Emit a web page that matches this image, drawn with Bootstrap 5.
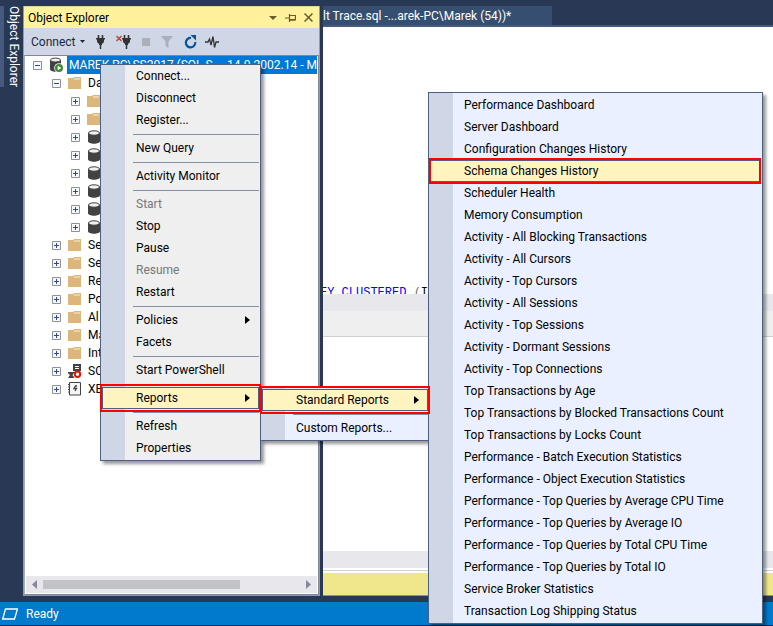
<!DOCTYPE html>
<html lang="en">
<head>
<meta charset="utf-8">
<meta name="viewport" content="width=device-width, initial-scale=1">
<title>Object Explorer</title>
<link href="https://cdn.jsdelivr.net/npm/bootstrap@5.3.0/dist/css/bootstrap.min.css" rel="stylesheet">
<style>
:root { --frame:#293955; --edge:#8e9bbc; --line:#4d6082; --strip:#cfd6e5; --hot:#fdf4bf; }
body { font:12px/18px Roboto,"Open Sans",sans-serif; color:#000; background:var(--frame); overflow:hidden; }
button { font:inherit; color:inherit; background:none; border:0; padding:0; text-align:left; white-space:nowrap; }
svg { display:block; flex:none; }
.main-area { padding-top:6px; padding-bottom:6px; min-height:0; }
.side-rail { width:23px; }
.side-tab { writing-mode:vertical-rl; width:23px; min-height:80px; border-left:4px solid #465a7d; color:#fff; line-height:17px; }
.dock { width:297px; border:1px solid var(--edge); border-top:0; background:var(--strip); margin-right:3px; }
.dock-title { height:22px; background:#fff29d; border-top:1px solid #e3d79a; padding:0 6px 0 4px; }
.dock-title h1 { font-size:12px; line-height:20px; margin:0; font-weight:400; }
.toolbar-row { height:27px; padding-left:7px; color:#1b293e; }
.connect-btn { width:54px; }
.tool-set { gap:11px; margin-left:11px; }
.tree { border:1px solid #828790; border-left-color:#a5adbd; background:#fff; min-height:0; padding:0 1px 1px 1px; }
.node { height:18px; white-space:nowrap; }
.node svg.glyph { margin-left:7px; margin-right:3px; }
.lvl-0 { padding-left:7px; }
.lvl-1 { padding-left:26px; }
.lvl-2 { padding-left:45px; }
.node-name { padding-left:3px; }
.picked { background:#0078d7; color:#fff; padding-left:2px; }
.scroller { height:17px; background:#e8e8ec; padding:0 6px; }
.thumb { height:9px; width:197px; background:#c2c3c9; margin-left:6px; }
.doc { min-width:0; }
.doc-tab { height:19px; width:229px; background:#364e6f; color:#fff; line-height:21px; }
.sheet { background:#fff; border-top:2px solid #465a7d; border-bottom:1px solid #8a90a0; min-height:0; }
.code-pane { height:267px; overflow:hidden; white-space:pre; }
.code-pane code { font:12px/16px "Liberation Mono",monospace; color:#00f; margin-left:-3px; margin-bottom:-7px; }
.band { height:17px; background:#e8e8ec; }
.band-tabs { height:26px; background:#efefef; border-bottom:1px solid #d0d0d0; }
.band-rule { height:3px; border-top:1px solid #d0d0d0; margin-top:2px; }
.band-note { height:22px; background:#f0e68c; }
.status { height:24px; background:#007acc; color:#fff; border-bottom:1px solid #06263f; padding-left:2px; }
.flyout { position:absolute; margin:0; padding:1px 1px 1px 0; list-style:none; border:1px solid var(--line); background:linear-gradient(90deg,var(--strip) 24px,#eaf0ff 24px); box-shadow:3px 3px 3px rgba(0,0,0,.4); }
.flyout button { display:flex; align-items:center; justify-content:space-between; width:100%; height:22px; padding:0 9px 0 35px; }
.flyout button:disabled { color:#777; }
.flyout hr { margin:3px 0 2px 32px; border:0; border-top:1px solid #8591a8; opacity:1; }
.flyout .hot { position:relative; width:auto; min-width:calc(100% - 1px); margin-left:1px; padding-left:33px; padding-right:8px; background:var(--hot); border:1px solid var(--line); }
.hot::after { content:""; position:absolute; z-index:5; inset:-4px -3px; border:2px solid #f00; }
.menu-main { left:100px; top:64px; width:161px; padding-top:0; background:linear-gradient(90deg,var(--strip) 24px,#efefef 24px); }
.menu-reports { left:260px; top:387px; width:170px; }
.menu-standard { left:428px; top:92px; width:335px; padding-right:0; }
.menu-standard .hot { min-width:calc(100% - 3px); margin-right:2px; }
.menu-standard .hot::after { inset:-3px -2px; }
</style>
<script src="https://cdn.jsdelivr.net/npm/bootstrap@5.3.0/dist/js/bootstrap.bundle.min.js"></script>
</head>
<body class="vh-100 d-flex flex-column position-relative">
<svg width="0" height="0" class="position-absolute" aria-hidden="true">
  <defs>
    <symbol id="plus" viewBox="0 0 9 9"><path d="M.5.5h8v8h-8z" fill="#f8f8f8" stroke="#919191"/><path d="M2 4.5h5M4.5 2v5" stroke="#2b4a9b"/></symbol>
    <symbol id="minus" viewBox="0 0 9 9"><path d="M.5.5h8v8h-8z" fill="#f8f8f8" stroke="#919191"/><path d="M2 4.5h5" stroke="#2b4a9b"/></symbol>
    <symbol id="folder" viewBox="0 0 14 14"><path d="M0 2h5l1-1h7v12H0z" fill="#dcb67a"/><path d="M6 3h6" stroke="#f8eedc"/></symbol>
    <symbol id="db" viewBox="0 0 14 14"><path d="M1 3v8c0 3.600 12 3.600 12 0V3z" fill="#424242"/><ellipse cx="7" cy="3" rx="5.500" ry="2.200" fill="#f0f0f0" stroke="#424242"/></symbol>
    <symbol id="server" viewBox="0 0 15 16"><path d="M1 3v9c0 3.600 11 3.600 11 0V3z" fill="#424242"/><ellipse cx="6.500" cy="3" rx="5" ry="2" fill="#f0f0f0" stroke="#424242"/><circle cx="10" cy="11" r="4.800" fill="#fff"/><circle cx="10" cy="11" r="4" fill="#388a34"/><path d="M8.700 8.700v4.600l3.800-2.300z" fill="#fff"/></symbol>
    <symbol id="agent" viewBox="0 0 14 14"><path d="M5 0h8v7H5z" fill="#424242"/><path d="M7 2.500h4M7 4.500h4" stroke="#fff"/><path d="M0 8h7v1.500H5.500L4.500 11 6.500 14H0l2-3L.5 9.500H0z" fill="#424242"/><circle cx="9.500" cy="10.300" r="2.700" fill="#fff" stroke="#e51400" stroke-width="2"/></symbol>
    <symbol id="events" viewBox="0 0 14 14"><path d="M1.500.5h11v12.500h-11z" fill="#f4f4f4" stroke="#424242"/><path d="M0 2.500h2M0 5h2M0 7.500h2M0 10h2" stroke="#424242"/><path d="M9 4H7.500L6 6.500h2.500L7 9" fill="none" stroke="#424242" stroke-width="1.300"/></symbol>
    <symbol id="plug" viewBox="0 0 9 14"><path d="M2.500 0v4M6.500 0v4" stroke="#333" stroke-width="1.600"/><path d="M0 3h9v1.500H8V7L6 9v1H3V9L1 7V4.500H0z" fill="#333"/><path d="M4.500 9v5" stroke="#333" stroke-width="1.500"/></symbol>
    <symbol id="arrow" viewBox="0 0 5 8"><path d="M0 0l5 4-5 4z"/></symbol>
  </defs>
</svg>

<main class="main-area d-flex flex-fill">
  <nav class="side-rail flex-shrink-0" aria-label="Docked windows"><button class="side-tab">Object Explorer</button></nav>

  <section class="dock d-flex flex-column flex-shrink-0">
    <header class="dock-title d-flex align-items-center">
      <h1 class="flex-fill">Object Explorer</h1>
      <div class="d-flex align-items-center gap-2">
        <button aria-label="Window position"><svg width="8" height="4" viewBox="0 0 8 4"><path d="M0 0h8L4 4z" fill="#6b5a2e"/></svg></button>
        <button aria-label="Auto hide"><svg width="11" height="8" viewBox="0 0 11 8"><path d="M0 4h4M4.500 0v8M5 1.500h5.500v4H5M5 6.200h5.500" fill="none" stroke="#6b5a2e" stroke-width="1.200"/></svg></button>
        <button aria-label="Close"><svg width="9" height="9" viewBox="0 0 9 9"><path d="M.5.5l8 8M8.500.5l-8 8" stroke="#6b5a2e" stroke-width="1.500"/></svg></button>
      </div>
    </header>
    <div class="toolbar-row d-flex align-items-center" role="toolbar">
      <button class="connect-btn d-flex align-items-center justify-content-between">Connect <svg width="5" height="3" viewBox="0 0 5 3"><path d="M0 0h5L2.500 3z" fill="#1b293e"/></svg></button>
      <div class="tool-set d-flex align-items-center">
        <button aria-label="Connect Object Explorer"><svg width="9" height="14"><use href="#plug"/></svg></button>
        <button class="d-flex" aria-label="Disconnect"><svg width="6" height="14" viewBox="0 0 6 14"><path d="M.5 1l5 5M5.500 1l-5 5" stroke="#b5482e" stroke-width="1.500"/></svg><svg width="9" height="14"><use href="#plug"/></svg></button>
        <button disabled aria-label="Stop"><svg width="8" height="8" viewBox="0 0 8 8"><path d="M0 0h8v8H0z" fill="#abafba"/></svg></button>
        <button disabled aria-label="Filter"><svg width="12" height="12" viewBox="0 0 12 12"><path d="M0 0h12L7.500 5.500V12l-3-2V5.500z" fill="#abafba"/></svg></button>
        <div class="d-flex align-items-center gap-2">
          <button aria-label="Refresh"><svg width="13" height="14" viewBox="0 0 13 14"><path d="M7 3a4.700 4.700 0 1 0 4.200 4" fill="none" stroke="#00539c" stroke-width="2.200"/><path d="M6.500 0H12v5.500z" fill="#00539c"/></svg></button>
          <button aria-label="Activity Monitor"><svg width="14" height="12" viewBox="0 0 14 12"><path d="M0 6h3l1.500-3L6 9l2-8.500 1.500 11L11 6h3" fill="none" stroke="#333" stroke-width="1.300"/></svg></button>
        </div>
      </div>
    </div>
    <div class="tree d-flex flex-column flex-fill">
      <div class="flex-fill overflow-hidden" role="tree">
        <div class="node lvl-0 d-flex align-items-center" role="treeitem"><svg width="9" height="9"><use href="#minus"/></svg><svg class="glyph" width="15" height="16"><use href="#server"/></svg><span class="picked d-flex justify-content-between flex-fill"><span>MAREK-PC\SS2017 (SQL S</span><span>14.0.2002.14 - M</span></span></div>
        <div class="node lvl-1 d-flex align-items-center" role="treeitem"><svg width="9" height="9"><use href="#minus"/></svg><svg class="glyph" width="14" height="14"><use href="#folder"/></svg><span class="node-name">Da</span></div>
        <div class="node lvl-2 d-flex align-items-center" role="treeitem"><svg width="9" height="9"><use href="#plus"/></svg><svg class="glyph" width="14" height="14"><use href="#folder"/></svg></div>
        <div class="node lvl-2 d-flex align-items-center" role="treeitem"><svg width="9" height="9"><use href="#plus"/></svg><svg class="glyph" width="14" height="14"><use href="#folder"/></svg></div>
        <div class="node lvl-2 d-flex align-items-center" role="treeitem"><svg width="9" height="9"><use href="#plus"/></svg><svg class="glyph" width="14" height="14"><use href="#db"/></svg></div>
        <div class="node lvl-2 d-flex align-items-center" role="treeitem"><svg width="9" height="9"><use href="#plus"/></svg><svg class="glyph" width="14" height="14"><use href="#db"/></svg></div>
        <div class="node lvl-2 d-flex align-items-center" role="treeitem"><svg width="9" height="9"><use href="#plus"/></svg><svg class="glyph" width="14" height="14"><use href="#db"/></svg></div>
        <div class="node lvl-2 d-flex align-items-center" role="treeitem"><svg width="9" height="9"><use href="#plus"/></svg><svg class="glyph" width="14" height="14"><use href="#db"/></svg></div>
        <div class="node lvl-2 d-flex align-items-center" role="treeitem"><svg width="9" height="9"><use href="#plus"/></svg><svg class="glyph" width="14" height="14"><use href="#db"/></svg></div>
        <div class="node lvl-2 d-flex align-items-center" role="treeitem"><svg width="9" height="9"><use href="#plus"/></svg><svg class="glyph" width="14" height="14"><use href="#db"/></svg></div>
        <div class="node lvl-1 d-flex align-items-center" role="treeitem"><svg width="9" height="9"><use href="#plus"/></svg><svg class="glyph" width="14" height="14"><use href="#folder"/></svg><span class="node-name">Se</span></div>
        <div class="node lvl-1 d-flex align-items-center" role="treeitem"><svg width="9" height="9"><use href="#plus"/></svg><svg class="glyph" width="14" height="14"><use href="#folder"/></svg><span class="node-name">Se</span></div>
        <div class="node lvl-1 d-flex align-items-center" role="treeitem"><svg width="9" height="9"><use href="#plus"/></svg><svg class="glyph" width="14" height="14"><use href="#folder"/></svg><span class="node-name">Re</span></div>
        <div class="node lvl-1 d-flex align-items-center" role="treeitem"><svg width="9" height="9"><use href="#plus"/></svg><svg class="glyph" width="14" height="14"><use href="#folder"/></svg><span class="node-name">Po</span></div>
        <div class="node lvl-1 d-flex align-items-center" role="treeitem"><svg width="9" height="9"><use href="#plus"/></svg><svg class="glyph" width="14" height="14"><use href="#folder"/></svg><span class="node-name">Al</span></div>
        <div class="node lvl-1 d-flex align-items-center" role="treeitem"><svg width="9" height="9"><use href="#plus"/></svg><svg class="glyph" width="14" height="14"><use href="#folder"/></svg><span class="node-name">Ma</span></div>
        <div class="node lvl-1 d-flex align-items-center" role="treeitem"><svg width="9" height="9"><use href="#plus"/></svg><svg class="glyph" width="14" height="14"><use href="#folder"/></svg><span class="node-name">Int</span></div>
        <div class="node lvl-1 d-flex align-items-center" role="treeitem"><svg width="9" height="9"><use href="#plus"/></svg><svg class="glyph" width="14" height="14"><use href="#agent"/></svg><span class="node-name">SQ</span></div>
        <div class="node lvl-1 d-flex align-items-center" role="treeitem"><svg width="9" height="9"><use href="#plus"/></svg><svg class="glyph" width="14" height="14"><use href="#events"/></svg><span class="node-name">XE</span></div>
      </div>
      <div class="scroller d-flex align-items-center">
        <svg width="5" height="9" viewBox="0 0 5 9"><path d="M5 0v9L0 4.500z" fill="#868999"/></svg>
        <div class="thumb"></div>
        <svg class="ms-auto" width="5" height="9" viewBox="0 0 5 9"><path d="M0 0v9l5-4.500z" fill="#868999"/></svg>
      </div>
    </div>
  </section>

  <section class="doc d-flex flex-column flex-fill">
    <button class="doc-tab">lt Trace.sql -...arek-PC\Marek (54))*</button>
    <div class="sheet d-flex flex-column flex-fill">
      <div class="code-pane d-flex align-items-end"><code>EY CLUSTERED <span class="text-secondary">(</span><span class="text-black">Id</span></code></div>
      <div class="band"></div>
      <div class="band-tabs"></div>
      <div class="flex-fill"></div>
      <div class="band"></div>
      <div class="band-rule"></div>
      <div class="band-note"></div>
    </div>
  </section>
</main>

<footer class="status d-flex align-items-center gap-2 flex-shrink-0">
  <svg width="16" height="12" viewBox="0 0 16 12"><path d="M3.500 1h12L12.500 11H.7z" fill="none" stroke="#fff" stroke-width="1.300"/></svg>
  <span>Ready</span>
</footer>

<ul class="flyout menu-main">
  <li><button>Connect...</button></li>
  <li><button>Disconnect</button></li>
  <li><button>Register...</button></li>
  <li><hr></li>
  <li><button>New Query</button></li>
  <li><hr></li>
  <li><button>Activity Monitor</button></li>
  <li><hr></li>
  <li><button disabled>Start</button></li>
  <li><button>Stop</button></li>
  <li><button>Pause</button></li>
  <li><button disabled>Resume</button></li>
  <li><button>Restart</button></li>
  <li><hr></li>
  <li><button>Policies <svg width="5" height="8"><use href="#arrow"/></svg></button></li>
  <li><button>Facets</button></li>
  <li><hr></li>
  <li><button>Start PowerShell</button></li>
  <li><hr></li>
  <li><button class="hot">Reports <svg width="5" height="8"><use href="#arrow"/></svg></button></li>
  <li><hr></li>
  <li><button>Refresh</button></li>
  <li><button>Properties</button></li>
</ul>

<ul class="flyout menu-reports">
  <li><button class="hot">Standard Reports <svg width="5" height="8"><use href="#arrow"/></svg></button></li>
  <li><hr></li>
  <li><button>Custom Reports...</button></li>
</ul>

<ul class="flyout menu-standard">
  <li><button>Performance Dashboard</button></li>
  <li><button>Server Dashboard</button></li>
  <li><button>Configuration Changes History</button></li>
  <li><button class="hot">Schema Changes History</button></li>
  <li><button>Scheduler Health</button></li>
  <li><button>Memory Consumption</button></li>
  <li><button>Activity - All Blocking Transactions</button></li>
  <li><button>Activity - All Cursors</button></li>
  <li><button>Activity - Top Cursors</button></li>
  <li><button>Activity - All Sessions</button></li>
  <li><button>Activity - Top Sessions</button></li>
  <li><button>Activity - Dormant Sessions</button></li>
  <li><button>Activity - Top Connections</button></li>
  <li><button>Top Transactions by Age</button></li>
  <li><button>Top Transactions by Blocked Transactions Count</button></li>
  <li><button>Top Transactions by Locks Count</button></li>
  <li><button>Performance - Batch Execution Statistics</button></li>
  <li><button>Performance - Object Execution Statistics</button></li>
  <li><button>Performance - Top Queries by Average CPU Time</button></li>
  <li><button>Performance - Top Queries by Average IO</button></li>
  <li><button>Performance - Top Queries by Total CPU Time</button></li>
  <li><button>Performance - Top Queries by Total IO</button></li>
  <li><button>Service Broker Statistics</button></li>
  <li><button>Transaction Log Shipping Status</button></li>
</ul>
</body>
</html>
